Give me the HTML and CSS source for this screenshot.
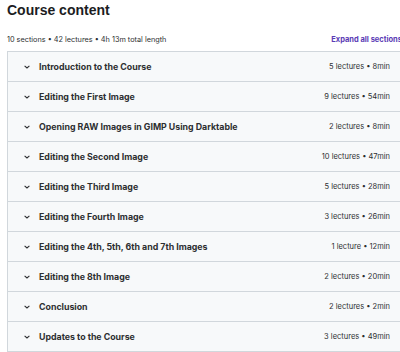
FILE: index.html
```html
<!DOCTYPE html>
<html lang="en">
<head>
    <meta charset="UTF-8">
    <meta name="viewport" content="width=device-width, initial-scale=1.0">
    <title>Course content</title>
    <link rel="stylesheet" href="styles.css">
</head>
<body>
    <div class="curriculum">
        <h2 class="title">Course content</h2>
        <div class="summary">
            <span class="stats">10 sections • 42 lectures • 4h 13m total length</span>
            <button class="expand">Expand all sections</button>
        </div>
        <div class="sections">
            <div class="section">
                <span class="chevron"><svg viewBox="0 0 6 4"><path d="M0.6 0.8 L3 3 L5.4 0.8"/></svg></span>
                <span class="section-title">Introduction to the Course</span>
                <span class="section-meta">5 lectures • 8min</span>
            </div>
            <div class="section">
                <span class="chevron"><svg viewBox="0 0 6 4"><path d="M0.6 0.8 L3 3 L5.4 0.8"/></svg></span>
                <span class="section-title">Editing the First Image</span>
                <span class="section-meta">9 lectures • 54min</span>
            </div>
            <div class="section">
                <span class="chevron"><svg viewBox="0 0 6 4"><path d="M0.6 0.8 L3 3 L5.4 0.8"/></svg></span>
                <span class="section-title">Opening RAW Images in GIMP Using Darktable</span>
                <span class="section-meta">2 lectures • 8min</span>
            </div>
            <div class="section">
                <span class="chevron"><svg viewBox="0 0 6 4"><path d="M0.6 0.8 L3 3 L5.4 0.8"/></svg></span>
                <span class="section-title">Editing the Second Image</span>
                <span class="section-meta">10 lectures • 47min</span>
            </div>
            <div class="section">
                <span class="chevron"><svg viewBox="0 0 6 4"><path d="M0.6 0.8 L3 3 L5.4 0.8"/></svg></span>
                <span class="section-title">Editing the Third Image</span>
                <span class="section-meta">5 lectures • 28min</span>
            </div>
            <div class="section">
                <span class="chevron"><svg viewBox="0 0 6 4"><path d="M0.6 0.8 L3 3 L5.4 0.8"/></svg></span>
                <span class="section-title">Editing the Fourth Image</span>
                <span class="section-meta">3 lectures • 26min</span>
            </div>
            <div class="section">
                <span class="chevron"><svg viewBox="0 0 6 4"><path d="M0.6 0.8 L3 3 L5.4 0.8"/></svg></span>
                <span class="section-title">Editing the 4th, 5th, 6th and 7th Images</span>
                <span class="section-meta">1 lecture • 12min</span>
            </div>
            <div class="section">
                <span class="chevron"><svg viewBox="0 0 6 4"><path d="M0.6 0.8 L3 3 L5.4 0.8"/></svg></span>
                <span class="section-title">Editing the 8th Image</span>
                <span class="section-meta">2 lectures • 20min</span>
            </div>
            <div class="section">
                <span class="chevron"><svg viewBox="0 0 6 4"><path d="M0.6 0.8 L3 3 L5.4 0.8"/></svg></span>
                <span class="section-title">Conclusion</span>
                <span class="section-meta">2 lectures • 2min</span>
            </div>
            <div class="section">
                <span class="chevron"><svg viewBox="0 0 6 4"><path d="M0.6 0.8 L3 3 L5.4 0.8"/></svg></span>
                <span class="section-title">Updates to the Course</span>
                <span class="section-meta">3 lectures • 49min</span>
            </div>
        </div>
    </div>
</body>
</html>
```

FILE: styles.css
```css
body {
    margin: 0;
    background-color: #ffffff;
    color: #2d2f31;
    font-family: 'Inter', 'Roboto', sans-serif;
    overflow: hidden;
}
.curriculum {
    padding: 0 0 0 7px;
    width: 420px;
    box-sizing: border-box;
}
.title {
    margin: 0;
    padding-top: 1px;
    font-family: 'Liberation Sans Narrow', 'Liberation Sans', sans-serif;
    font-size: 14px;
    font-weight: 700;
    line-height: 19px;
    color: #1c1d1f;
}
.summary {
    display: flex;
    justify-content: space-between;
    align-items: center;
    width: 398px;
    margin-top: 13px;
    height: 12px;
    margin-bottom: 6px;
    white-space: nowrap;
}
.stats {
    font-size: 7.3px;
    color: #2d2f31;
}
.expand {
    border: none;
    background: none;
    padding: 0;
    margin-right: 3px;
    font-family: inherit;
    font-size: 7.5px;
    font-weight: 700;
    color: #5a3bb5;
    cursor: pointer;
}
.sections {
    border-bottom: 1px solid #d1d7dc;
    border-left: 1px solid #d1d7dc;
}
.section {
    display: flex;
    align-items: center;
    height: 29px;
    border-top: 1px solid #d1d7dc;
    background-color: #f7f9fa;
    padding: 0 0 0 16px;
}
.chevron {
    width: 6px;
    height: 4px;
    margin-right: 9px;
    display: flex;
}
.chevron svg {
    width: 6px;
    height: 4px;
    fill: none;
    stroke: #2d2f31;
    stroke-width: 1.1;
}
.section-title {
    flex: 1;
    font-size: 8.8px;
    font-weight: 700;
    white-space: nowrap;
}
.section-meta {
    font-size: 7.5px;
    text-align: right;
    margin-right: 30px;
    white-space: nowrap;
}
```
